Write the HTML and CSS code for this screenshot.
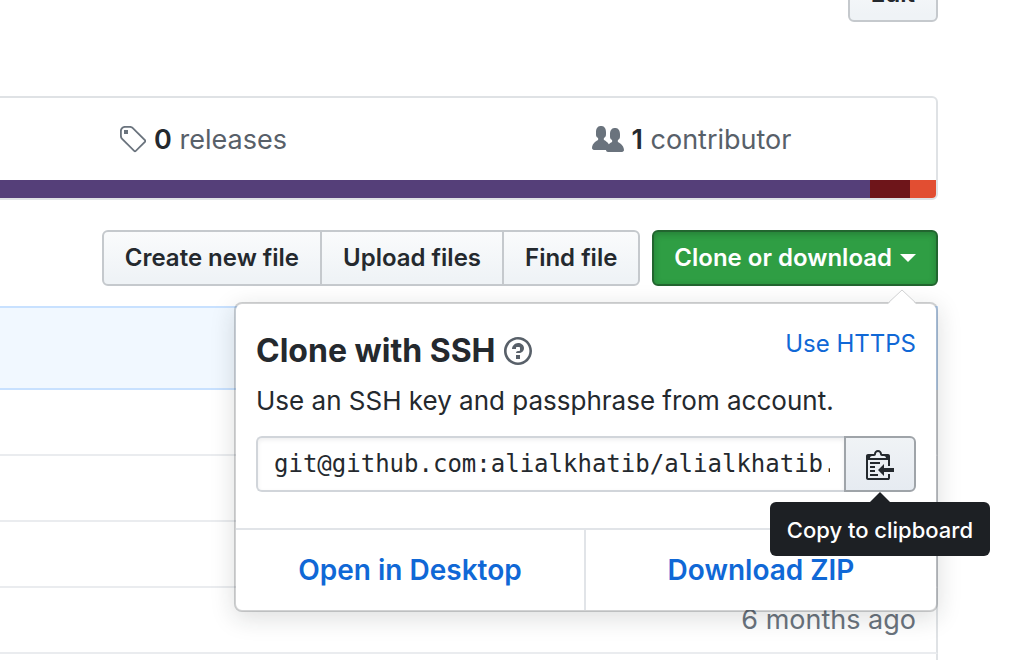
FILE: index.html
```
<!DOCTYPE html>
<html lang="en">
<head>
<meta charset="utf-8">
<title>Repository</title>
<link rel="stylesheet" href="styles.css">
</head>
<body>
<main class="page">
  <header class="topline">
    <button class="btn" type="button">Edit</button>
  </header>

  <section class="summary">
    <ul class="numbers">
      <li><a class="number" href="#releases">
        <svg class="icon" width="28" height="32" viewBox="0 0 14 16" aria-hidden="true"><path fill-rule="evenodd" d="M7.73 1.73C7.26 1.26 6.62 1 5.96 1H3.5C2.13 1 1 2.13 1 3.5v2.47c0 .66.27 1.3.73 1.77l6.06 6.06c.39.39 1.02.39 1.41 0l4.59-4.59a.996.996 0 0 0 0-1.41L7.73 1.73zM2.38 7.09c-.31-.3-.47-.7-.47-1.13V3.5c0-.88.72-1.59 1.59-1.59h2.47c.42 0 .83.16 1.13.47l6.14 6.13-4.73 4.73-6.13-6.15zM3.01 3h2v2H3V3h.01z"/></svg>
        <span><strong>0</strong> releases</span></a></li>
      <li><a class="number" href="#contributors">
        <svg class="icon" width="32" height="32" viewBox="0 0 16 16" aria-hidden="true"><path fill-rule="evenodd" d="M16 12.999c0 .439-.45 1-1 1H7.995c-.539 0-.994-.447-.995-.999H1c-.54 0-1-.561-1-1 0-2.634 3-4 3-4s.229-.409 0-1c-.841-.621-1.058-.59-1-3 .058-2.419 1.367-3 2.5-3s2.442.58 2.5 3c.058 2.41-.159 2.379-1 3-.229.59 0 1 0 1s1.549.711 2.42 2.088C9.196 9.369 10 8.999 10 8.999s.229-.409 0-1c-.841-.62-1.058-.59-1-3 .058-2.419 1.367-3 2.5-3s2.437.581 2.495 3c.059 2.41-.158 2.38-1 3-.229.59 0 1 0 1s3.005 1.366 3.005 4z"/></svg>
        <span><strong>1</strong> contributor</span></a></li>
    </ul>
    <div class="languages">
      <span class="lang lang-main"></span>
      <span class="lang lang-second"></span>
      <span class="lang lang-third"></span>
    </div>
  </section>

  <div class="toolbar">
    <div class="btn-group">
      <button class="btn" type="button">Create new file</button>
      <button class="btn" type="button">Upload files</button>
      <button class="btn" type="button">Find file</button>
    </div>
    <div class="clone">
      <button class="btn btn-primary" type="button" aria-expanded="true">Clone or download <span class="caret"></span></button>
      <div class="popover">
        <svg class="popover-tip" width="32" height="16" viewBox="0 0 32 16" aria-hidden="true"><path class="tip-fill" d="M1 16 16 1l15 15z"/><path class="tip-line" d="M1 15 16 1l15 14"/></svg>
        <div class="popover-body">
          <div class="popover-head">
            <h2 class="title">Clone with SSH
              <a class="help" href="#help" aria-label="Help"><svg width="28" height="32" viewBox="0 0 14 16" aria-hidden="true"><path fill-rule="evenodd" d="M6 10h2v2H6v-2zm4-3.5C10 8.64 8 9 8 9H6c0-.55.45-1 1-1h.5c.28 0 .5-.22.5-.5v-1c0-.28-.22-.5-.5-.5h-1c-.28 0-.5.22-.5.5V7H4c0-1.5 1.5-3 3-3s3 1 3 2.5zM7 2.3c3.14 0 5.7 2.56 5.7 5.7s-2.56 5.7-5.7 5.7A5.71 5.71 0 0 1 1.3 8c0-3.14 2.56-5.7 5.7-5.7zM7 1C3.14 1 0 4.14 0 8s3.14 7 7 7 7-3.14 7-7-3.14-7-7-7z"/></svg></a>
            </h2>
            <button class="switch" type="button">Use HTTPS</button>
          </div>
          <label class="description" for="clone-url">Use an SSH key and passphrase from account.</label>
          <div class="url-row">
            <input class="url" id="clone-url" type="text" readonly value="git@github.com:alialkhatib/alialkhatib.github.io.git">
            <div class="copy">
              <button class="copy-btn" type="button" aria-describedby="copy-tip" aria-label="Copy"><svg width="28" height="32" viewBox="0 0 14 16" aria-hidden="true"><path fill-rule="evenodd" d="M2 13h4v1H2v-1zm5-6H2v1h5V7zm2 3V8l-3 3 3 3v-2h5v-2H9zM4.5 9H2v1h2.5V9zM2 12h2.5v-1H2v1zm9 1h1v2c-.02.28-.11.52-.3.7-.19.18-.42.28-.7.3H1c-.55 0-1-.45-1-1V4c0-.55.45-1 1-1h3c0-1.11.89-2 2-2 1.11 0 2 .89 2 2h3c.55 0 1 .45 1 1v5h-1V6H1v9h10v-2zM2 5h8c0-.55-.45-1-1-1H8c-.55 0-1-.45-1-1s-.45-1-1-1-1 .45-1 1-.45 1-1 1H3c-.55 0-1 .45-1 1z"/></svg></button>
              <div class="tooltip" id="copy-tip" role="tooltip">Copy to clipboard</div>
            </div>
          </div>
        </div>
        <div class="popover-actions">
          <a href="#desktop">Open in Desktop</a>
          <a href="#zip">Download ZIP</a>
        </div>
      </div>
    </div>
  </div>

  <table class="files">
    <thead><tr><td></td></tr></thead>
    <tbody>
      <tr><td></td></tr>
      <tr><td></td></tr>
      <tr><td></td></tr>
      <tr><td>6 months ago</td></tr>
      <tr><td></td></tr>
    </tbody>
  </table>
</main>
</body>
</html>
```
FILE: styles.css
```
* { box-sizing: border-box; }

body {
  margin: 0;
  background: #fff;
  color: #24292e;
  font-family: Inter, "Liberation Sans", sans-serif;
  font-size: 26px;
  line-height: 40px;
  height: 100vh;
  overflow: hidden;
}

a { text-decoration: none; color: #1068d6; }

.page { margin: 0 76px 0 -44px; }

.topline {
  display: flex;
  justify-content: flex-end;
  align-items: flex-end;
  height: 22px;
}

.btn {
  flex: none;
  height: 56px;
  padding: 0 21px;
  border: 2px solid #c5c9cd;
  border-radius: 6px;
  background: linear-gradient(#fafbfc, #eff3f6 90%);
  color: #24292e;
  font: 600 24px/50px Inter, "Liberation Sans", sans-serif;
  white-space: nowrap;
}

.summary {
  margin-top: 74px;
  border: 2px solid #dfe2e5;
  border-radius: 6px;
  overflow: hidden;
}

.numbers {
  display: grid;
  grid-template-columns: 1fr 1fr;
  margin: 0;
  padding: 22px 0 20px;
  list-style: none;
  font-size: 27px;
}

.number {
  display: flex;
  justify-content: center;
  align-items: center;
  gap: 8px;
  color: #586069;
}

.number strong { font-weight: 600; color: #24292e; }
.icon { fill: #6a737d; }

.languages { display: flex; height: 18px; }
.lang-main { flex: 1; background: #553f79; }
.lang-second { width: 40px; background: #6e151a; }
.lang-third { width: 26px; background: #e24e32; }

.toolbar {
  display: flex;
  justify-content: flex-end;
  gap: 12px;
  margin-top: 30px;
}

.btn-group { display: flex; }
.btn-group .btn { border-radius: 0; }
.btn-group .btn + .btn { margin-left: -2px; }
.btn-group .btn:first-child { border-radius: 6px 0 0 6px; }
.btn-group .btn:last-child { border-radius: 0 6px 6px 0; }

.clone { position: relative; }

.btn-primary {
  display: flex;
  align-items: center;
  gap: 8px;
  padding: 0 20px;
  border-color: #22652f;
  background: #2f9e44;
  color: #fff;
  box-shadow: inset 0 2px 6px rgba(20, 70, 32, .35);
}

.caret {
  border: 8px solid transparent;
  border-top-color: #fff;
  border-bottom: 0;
}

.popover {
  position: absolute;
  z-index: 1;
  top: calc(100% + 16px);
  right: 0;
  width: 704px;
  border: 2px solid rgba(27, 31, 35, .2);
  border-radius: 8px;
  background: #fff;
  background-clip: padding-box;
  box-shadow: 0 6px 24px rgba(27, 31, 35, .15);
}

.popover-tip {
  position: absolute;
  right: 18px;
  bottom: 100%;
  margin-bottom: -1px;
}

.tip-fill { fill: #fff; }
.tip-line { fill: none; stroke: #d1d2d3; stroke-width: 1; }

.popover-body { padding: 20px 20px 36px; }

.popover-head {
  display: flex;
  justify-content: space-between;
  align-items: flex-start;
}

.title {
  display: flex;
  align-items: center;
  gap: 8px;
  margin: 6px 0 0;
  font-size: 32px;
  font-weight: 700;
  line-height: 42px;
}

.help { display: flex; }
.help svg { fill: #586069; }

.switch {
  padding: 0;
  border: 0;
  background: none;
  color: #1068d6;
  font: 24px/40px Inter, "Liberation Sans", sans-serif;
}

.description {
  display: block;
  margin: 8px 0 14px;
  line-height: 42px;
  white-space: nowrap;
}

.url-row { display: flex; height: 56px; }

.url {
  flex: 1;
  min-width: 0;
  padding: 0 14px 0 16px;
  border: 2px solid #d1d5da;
  border-right: 0;
  border-radius: 6px 0 0 6px;
  background: #fff;
  box-shadow: inset 0 2px 4px rgba(27, 31, 35, .075);
  color: #24292e;
  font: 24px "DejaVu Sans Mono", monospace;
  outline: 0;
}

.copy { position: relative; }

.copy-btn {
  display: flex;
  justify-content: center;
  align-items: center;
  width: 72px;
  height: 56px;
  padding: 0;
  border: 2px solid #9fa4a9;
  border-radius: 0 6px 6px 0;
  background: linear-gradient(#f0f3f6, #e6ebf1);
}

.copy-btn svg { fill: #24292e; }

.tooltip {
  position: absolute;
  top: calc(100% + 10px);
  right: -74px;
  padding: 8px 17px 6px;
  border-radius: 6px;
  background: #1d2024;
  color: #fff;
  font-size: 22px;
  font-weight: 500;
  white-space: nowrap;
}

.tooltip::before {
  content: "";
  position: absolute;
  right: 100px;
  bottom: 100%;
  border: 10px solid transparent;
  border-top: 0;
  border-bottom-color: #1d2024;
}

.popover-actions {
  display: grid;
  grid-template-columns: 1fr 1fr;
  border-top: 2px solid #e1e4e8;
  font-size: 28px;
}

.popover-actions a {
  padding: 20px;
  text-align: center;
  font-weight: 600;
}

.popover-actions a:first-child { border-right: 2px solid #e1e4e8; }

.files {
  width: 100%;
  margin-top: 20px;
  border-spacing: 0;
  font-size: 27px;
}

.files td {
  height: 66px;
  padding: 0 20px;
  border-right: 2px solid #dfe2e5;
  border-bottom: 2px solid #eaecef;
  color: #6a737d;
  text-align: right;
}

.files thead td {
  height: 84px;
  border: 2px solid #c8e1ff;
  background: #f1f8ff;
}
```
